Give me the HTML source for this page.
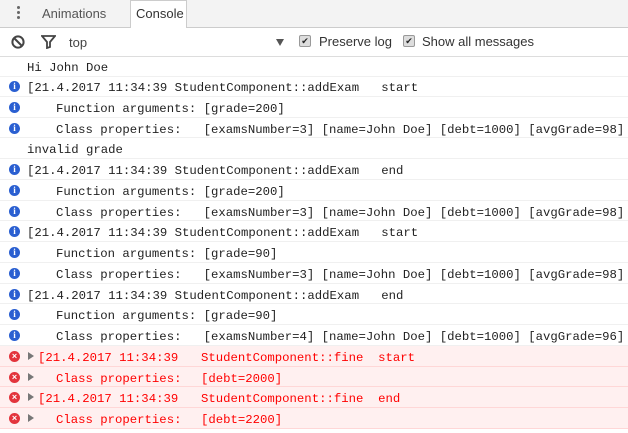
<!DOCTYPE html>
<html><head><meta charset="utf-8"><style>
body{margin:0;width:628px;height:433px;overflow:hidden;background:#fff;font-family:"Liberation Sans",sans-serif;position:relative}
.tabs{position:absolute;left:0;top:0;width:628px;height:27px;background:#f3f3f3;border-bottom:1px solid #ccc}
.tb{position:absolute;left:0;top:28px;width:628px;height:28px;border-bottom:1px solid #ddd;background:#fff}
.r{position:absolute;left:0;width:628px;height:20.75px;border-bottom:1px solid #f0f0f0;box-sizing:border-box;font-family:"Liberation Mono",monospace;font-size:12.3px;color:#222;white-space:pre;line-height:20px}
.r span{position:absolute;top:2px}
.e{background:#fff0f0;border-bottom:1px solid #ffd7d7;color:#f00}
.ii{position:absolute;left:9px;top:5px;width:11px;height:11px;border-radius:50%;background:#2a5fd1;color:#fff;font:bold 9px/11px "Liberation Serif",serif;text-align:center}
.ex{position:absolute;left:9px;top:5px;width:11px;height:11px;border-radius:50%;background:#e3343c;color:#fff;font:bold 9px/11px "Liberation Sans",sans-serif;text-align:center}
.ar{position:absolute;left:28px;top:6px;width:0;height:0;border-left:6px solid #777;border-top:4px solid transparent;border-bottom:4px solid transparent}
.cb{position:absolute;top:35px;width:10px;height:10px;border:1px solid #999;border-radius:2px;background:#ddd;font-size:9px;line-height:10px;text-align:center;color:#222}
</style></head><body>
<div class="tabs">
<div style="position:absolute;left:17px;top:6px;width:3px;height:3px;background:#666;border-radius:50%;box-shadow:0 5px 0 #666,0 10px 0 #666"></div>
<div style="position:absolute;left:42px;top:6px;font-size:13px;color:#555">Animations</div>
<div style="position:absolute;left:130px;top:0;width:57px;height:28px;background:#fff;border:1px solid #ccc;border-bottom:none;box-sizing:border-box"></div>
<div style="position:absolute;left:136px;top:6px;font-size:13px;color:#333">Console</div>
</div>
<div class="tb">
<svg style="position:absolute;left:10px;top:6px" width="16" height="16" viewBox="0 0 16 16"><circle cx="8" cy="8" r="5.6" fill="none" stroke="#444" stroke-width="2"/><path d="M4 4L12 12" stroke="#444" stroke-width="2"/></svg>
<svg style="position:absolute;left:41px;top:7px" width="15" height="14" viewBox="0 0 15 14"><path d="M1 1H14L9 7V12L6 13V7Z" fill="none" stroke="#444" stroke-width="1.8"/></svg>
<div style="position:absolute;left:69px;top:7px;font-size:13px;color:#444">top</div>
<div style="position:absolute;left:276px;top:11px;border-top:7px solid #555;border-left:4.5px solid transparent;border-right:4.5px solid transparent"></div>
</div>
<div class="cb" style="left:299px">✔</div>
<div style="position:absolute;left:319px;top:34px;font-size:13px;color:#333">Preserve log</div>
<div class="cb" style="left:403px">✔</div>
<div style="position:absolute;left:422px;top:34px;font-size:13px;color:#333">Show all messages</div>

<div class="r" style="top:56px"><span style="left:27px">Hi John Doe</span></div>
<div class="r" style="top:76px"><i class="ii">i</i><span style="left:27px">[21.4.2017 11:34:39 StudentComponent::addExam   start</span></div>
<div class="r" style="top:96.75px"><i class="ii">i</i><span style="left:56px">Function arguments: [grade=200]</span></div>
<div class="r" style="top:117.5px"><i class="ii">i</i><span style="left:56px">Class properties:   [examsNumber=3] [name=John Doe] [debt=1000] [avgGrade=98]</span></div>
<div class="r" style="top:138.25px"><span style="left:27px">invalid grade</span></div>
<div class="r" style="top:159px"><i class="ii">i</i><span style="left:27px">[21.4.2017 11:34:39 StudentComponent::addExam   end</span></div>
<div class="r" style="top:179.75px"><i class="ii">i</i><span style="left:56px">Function arguments: [grade=200]</span></div>
<div class="r" style="top:200.5px"><i class="ii">i</i><span style="left:56px">Class properties:   [examsNumber=3] [name=John Doe] [debt=1000] [avgGrade=98]</span></div>
<div class="r" style="top:221.25px"><i class="ii">i</i><span style="left:27px">[21.4.2017 11:34:39 StudentComponent::addExam   start</span></div>
<div class="r" style="top:242px"><i class="ii">i</i><span style="left:56px">Function arguments: [grade=90]</span></div>
<div class="r" style="top:262.75px"><i class="ii">i</i><span style="left:56px">Class properties:   [examsNumber=3] [name=John Doe] [debt=1000] [avgGrade=98]</span></div>
<div class="r" style="top:283.5px"><i class="ii">i</i><span style="left:27px">[21.4.2017 11:34:39 StudentComponent::addExam   end</span></div>
<div class="r" style="top:304.25px"><i class="ii">i</i><span style="left:56px">Function arguments: [grade=90]</span></div>
<div class="r" style="top:325px"><i class="ii">i</i><span style="left:56px">Class properties:   [examsNumber=4] [name=John Doe] [debt=1000] [avgGrade=96]</span></div>
<div class="r e" style="top:345.75px"><i class="ex">×</i><i class="ar"></i><span style="left:38px">[21.4.2017 11:34:39</span><span style="left:201px">StudentComponent::fine  start</span></div>
<div class="r e" style="top:366.5px"><i class="ex">×</i><i class="ar"></i><span style="left:56px">Class properties:</span><span style="left:201px">[debt=2000]</span></div>
<div class="r e" style="top:387.25px"><i class="ex">×</i><i class="ar"></i><span style="left:38px">[21.4.2017 11:34:39</span><span style="left:201px">StudentComponent::fine  end</span></div>
<div class="r e" style="top:408px"><i class="ex">×</i><i class="ar"></i><span style="left:56px">Class properties:</span><span style="left:201px">[debt=2200]</span></div>
</body></html>
